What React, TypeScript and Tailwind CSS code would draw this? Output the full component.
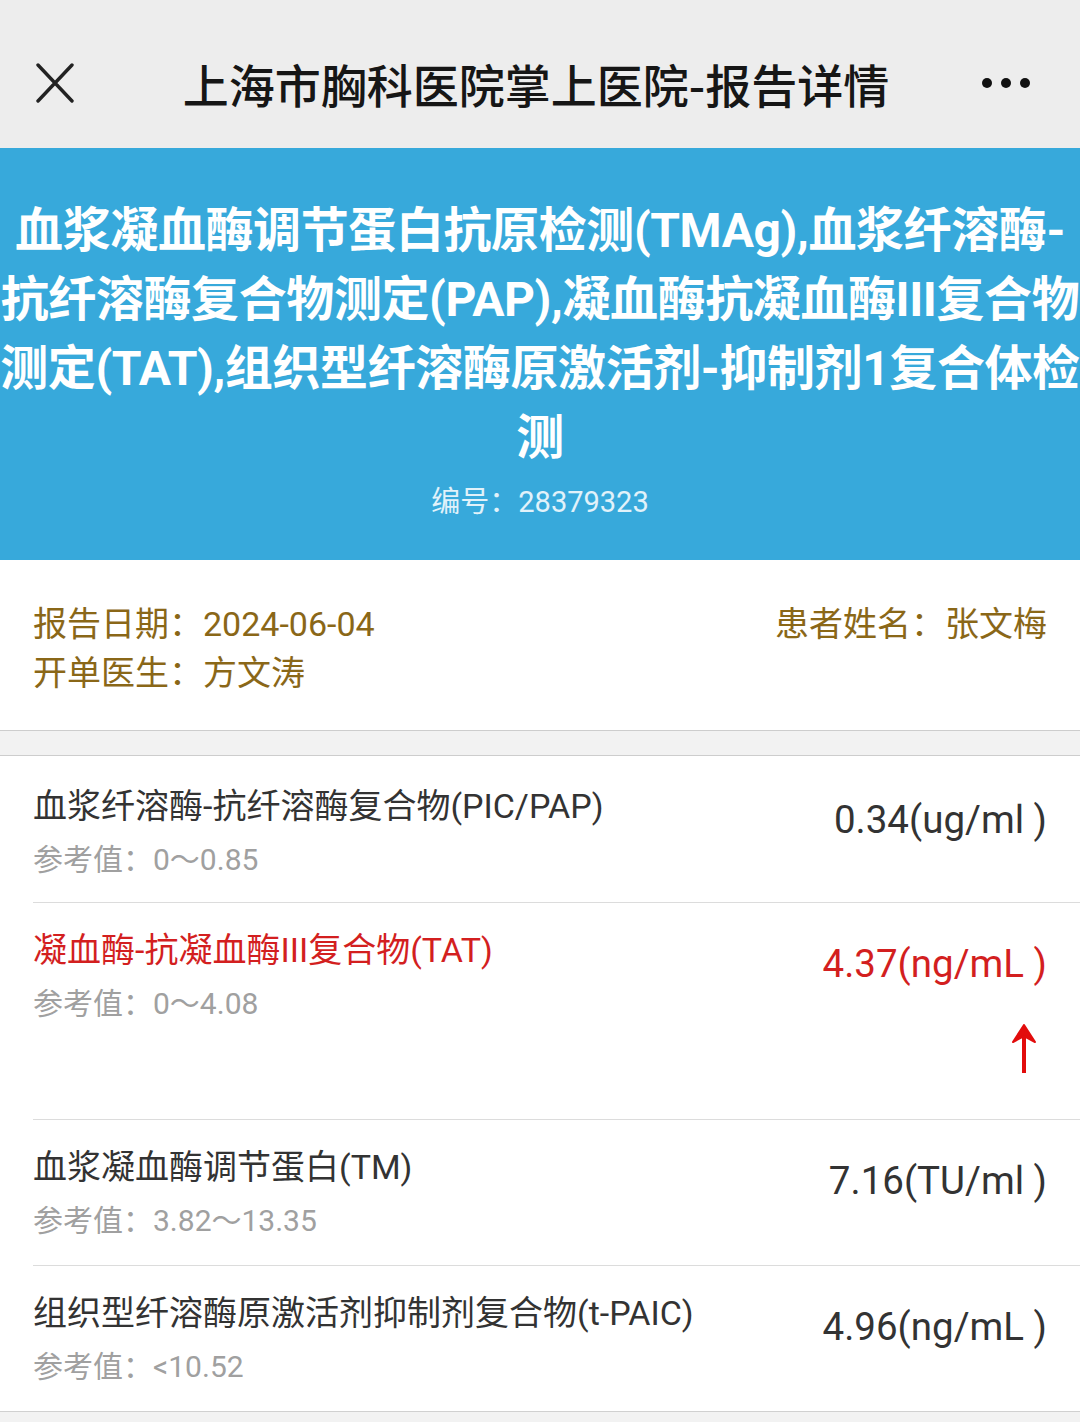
const rows = [
  {
    name: "血浆纤溶酶-抗纤溶酶复合物(PIC/PAP)",
    ref: "0～0.85",
    value: "0.34(ug/ml )",
    high: false,
  },
  {
    name: "凝血酶-抗凝血酶III复合物(TAT)",
    ref: "0～4.08",
    value: "4.37(ng/mL )",
    high: true,
  },
  {
    name: "血浆凝血酶调节蛋白(TM)",
    ref: "3.82～13.35",
    value: "7.16(TU/ml )",
    high: false,
  },
  {
    name: "组织型纤溶酶原激活剂抑制剂复合物(t-PAIC)",
    ref: "<10.52",
    value: "4.96(ng/mL )",
    high: false,
  },
];

const font = "font-['Roboto','Noto_Sans_CJK_SC',sans-serif]";

export default function App() {
  return (
    <div className={`w-[1080px] min-h-[1422px] bg-[#f2f2f2] ${font}`}>
      {/* top bar */}
      <header className="flex h-[148px] items-center bg-[#ededed] px-[36px] pt-[18px]">
        <svg width="38" height="40" viewBox="0 0 38 40" className="shrink-0">
          <path
            d="M2 2 L36 38 M36 2 L2 38"
            stroke="#222"
            strokeWidth="3.4"
            strokeLinecap="round"
          />
        </svg>
        <h1 className="flex-1 text-center text-[46px] font-medium leading-none text-[#161616] font-['Noto_Sans_CJK_SC',sans-serif] pl-[16px]">
          上海市胸科医院掌上医院-报告详情
        </h1>
        <div className="flex w-[62px] items-center gap-[9px] pr-[8px]">
          <span className="h-[10px] w-[10px] rounded-full bg-[#111]" />
          <span className="h-[10px] w-[10px] rounded-full bg-[#111]" />
          <span className="h-[10px] w-[10px] rounded-full bg-[#111]" />
        </div>
      </header>

      {/* title banner */}
      <section className="bg-[#37a9db] pt-[48px] pb-[38px] text-center text-white">
        <h2 className="whitespace-nowrap text-[48px] font-bold leading-[69px] tracking-[-0.4px]">
          血浆凝血酶调节蛋白抗原检测(TMAg),血浆纤溶酶-
          <br />
          抗纤溶酶复合物测定(PAP),凝血酶抗凝血酶III复合物
          <br />
          测定(TAT),组织型纤溶酶原激活剂-抑制剂1复合体检
          <br />
          测
        </h2>
        <p className="mt-[10px] text-[29px] leading-[40px] text-white/85">
          编号：28379323
        </p>
      </section>

      {/* info */}
      <section className="flex justify-between bg-white px-[33px] pt-[40px] pb-[32px] text-[34px] leading-[49px] text-[#8a6718]">
        <div>
          <p>报告日期：2024-06-04</p>
          <p>开单医生：方文涛</p>
        </div>
        <p>患者姓名：张文梅</p>
      </section>

      <div className="h-[26px] border-y border-[#cdcdcd] bg-[#f2f2f2]" />

      {/* results */}
      <section className="bg-white pl-[33px]">
        {rows.map((r, i) => (
          <div
            key={r.name}
            className={`flex items-start justify-between pr-[33px] ${
              i > 0 ? "border-t border-[#dcdcdc]" : ""
            }`}
          >
            <div
              className={
                i > 0 ? "pt-[23px] pb-[24px]" : "pt-[26px] pb-[22px]"
              }
            >
              <p
                className={`text-[34px] leading-[48px] ${
                  r.high ? "text-[#d31f1f]" : "text-[#333]"
                }`}
              >
                {r.name}
              </p>
              <p className="mt-[10px] text-[30px] leading-[40px] text-[#a0a0a0]">
                参考值：{r.ref}
              </p>
            </div>
            <div
              className={`flex flex-col items-end ${
                i > 0 ? "pt-[37px]" : "pt-[40px]"
              }`}
            >
              <p
                className={`text-[38.5px] leading-[48px] ${
                  r.high ? "text-[#d31f1f]" : "text-[#333]"
                }`}
              >
                {r.value}
              </p>
              {r.high && (
                <svg
                  width="24"
                  height="50"
                  viewBox="0 0 24 50"
                  className="mt-[36px] mb-[45px] mr-[11px]"
                >
                  <path d="M12 8 L12 49" stroke="#e20c0c" strokeWidth="4" />
                  <path
                    d="M12 1 L23 18 L12 12 L1 18 Z"
                    fill="#e20c0c"
                    stroke="#e20c0c"
                    strokeWidth="2"
                    strokeLinejoin="round"
                  />
                </svg>
              )}
            </div>
          </div>
        ))}
      </section>
      <div className="border-t border-[#d0d0d0]" />
    </div>
  );
}
